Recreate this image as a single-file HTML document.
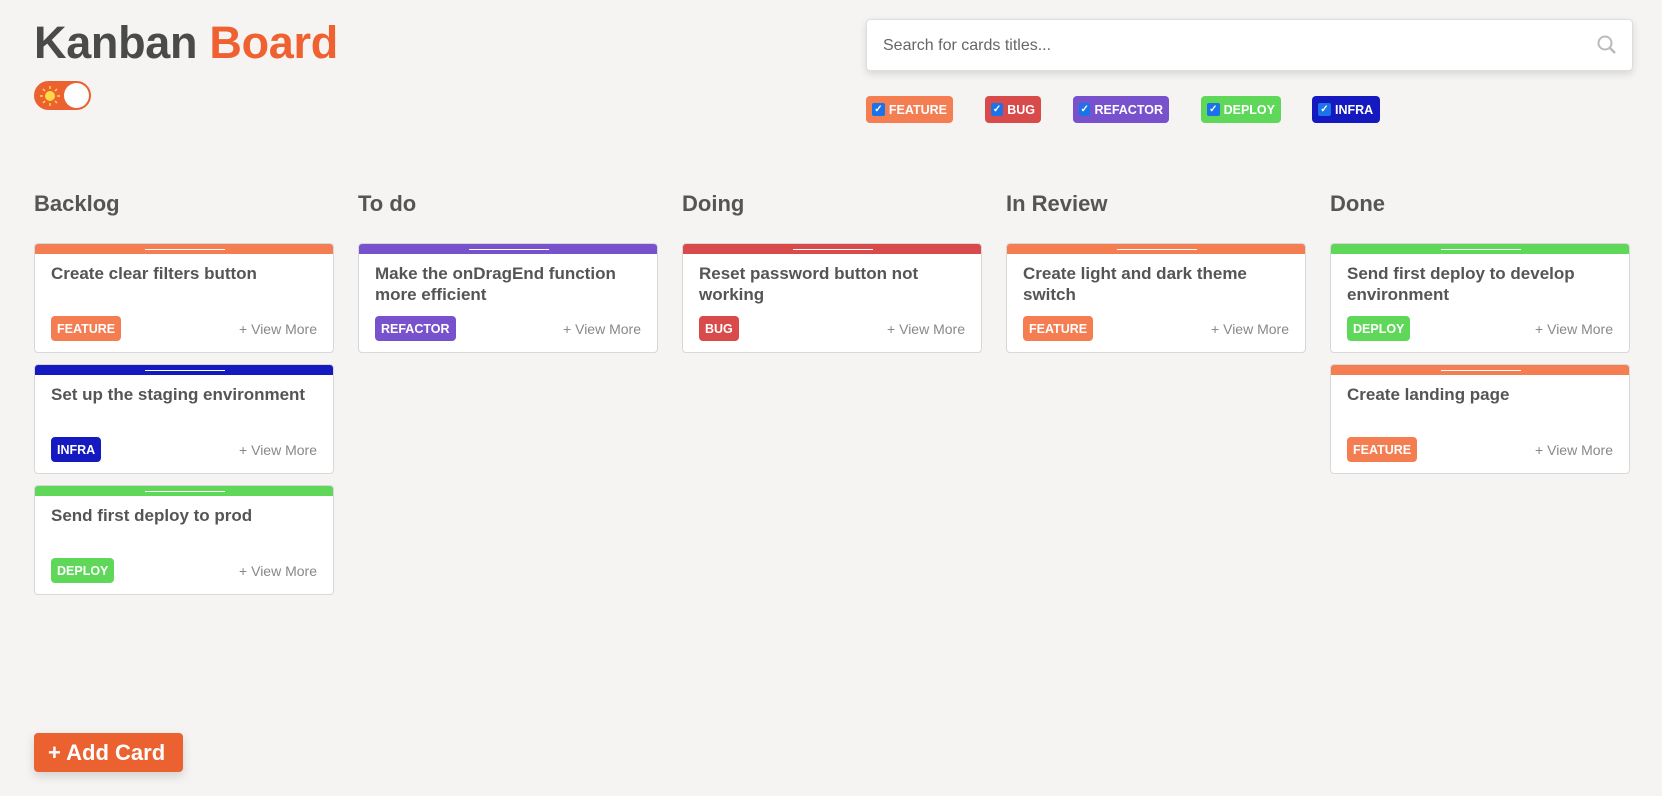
<!DOCTYPE html>
<html><head><meta charset="utf-8"><style>
*{box-sizing:border-box;margin:0;padding:0}
body{width:1662px;height:796px;background:#f5f4f2;font-family:"Liberation Sans",sans-serif;position:relative;overflow:hidden;color:#555}
h1{position:absolute;left:34px;top:17px;font-size:45px;font-weight:bold;color:#4a4a4a;letter-spacing:-0.3px}
h1 span{color:#ef6130}
.tog{position:absolute;left:34px;top:81px;width:57px;height:29px;border-radius:15px;background:#ec6130;border:1px solid #ec6130}
.tog .k{position:absolute;right:1px;top:1px;width:25px;height:25px;border-radius:50%;background:#fff}
.search{position:absolute;left:866px;top:19px;width:767px;height:52px;background:#fff;border:1px solid #ddd;border-radius:4px;box-shadow:0 3px 8px rgba(0,0,0,.12);font-size:16px;color:#666;padding:17px 0 0 16px}
.f{position:absolute;top:96px;height:27px;border-radius:4px;color:#fff;font-weight:bold;font-size:12.5px;padding:7px 6px 0 6px;display:flex;gap:4px}
.cb{width:13px;height:13px;background:#1a73e8;border-radius:2px;color:#fff;font-size:10px;line-height:13px;text-align:center;margin-top:0}
.col{position:absolute;top:191px;width:300px}
.col h2{font-size:22px;font-weight:bold;color:#555;height:52px}
.card{position:relative;width:300px;height:110px;background:#fff;border:1px solid #d8d8d8;border-radius:4px;margin-bottom:11px;overflow:hidden}
.card .bar{height:10px;position:relative}
.card .bar:after{content:"";position:absolute;left:110px;top:5px;width:80px;height:1px;background:#fff}
.card .t{font-size:17px;font-weight:bold;color:#555;padding:9px 16px 0;line-height:21px;height:62px}
.tag{position:absolute;left:16px;bottom:11px;height:25px;border-radius:4px;color:#fff;font-weight:bold;font-size:12.5px;padding:6px 6px 0}
.vm{position:absolute;right:16px;bottom:15px;font-size:14px;color:#888}
.add{position:absolute;left:34px;top:733px;width:149px;height:39px;background:#ec6130;border-radius:4px;color:#fff;font-weight:bold;font-size:22px;padding:7px 0 0 14px;box-shadow:0 4px 10px rgba(0,0,0,.15)}
</style></head><body>
<h1>Kanban <span>Board</span></h1>
<div class="tog"><svg width="26" height="26" style="position:absolute;left:2px;top:1px" viewBox="0 0 26 26"><circle cx="13" cy="13" r="5" fill="#ffd84a"/><g stroke="#ffd84a" stroke-width="1.5"><path d="M13 3v3M13 20v3M3 13h3M20 13h3M6 6l2 2M18 18l2 2M6 20l2-2M18 8l2-2"/></g></svg><div class="k"></div></div>
<div class="search">Search for cards titles...<svg style="position:absolute;right:14px;top:14px" width="22" height="22" viewBox="0 0 22 22"><circle cx="9" cy="9" r="6.5" fill="none" stroke="#bbb" stroke-width="2"/><path d="M14 14l5 5" stroke="#bbb" stroke-width="2.5"/></svg></div>
<div class="f" style="left:866px;width:87px;background:#f47d52"><div class="cb">✓</div>FEATURE</div>
<div class="f" style="left:985px;width:56px;background:#d94a4a"><div class="cb">✓</div>BUG</div>
<div class="f" style="left:1073px;width:96px;background:#7752cc"><div class="cb">✓</div>REFACTOR</div>
<div class="f" style="left:1201px;width:80px;background:#5fd85a"><div class="cb">✓</div>DEPLOY</div>
<div class="f" style="left:1312px;width:68px;background:#1419c0"><div class="cb">✓</div>INFRA</div>

<div class="col" style="left:34px"><h2>Backlog</h2>
<div class="card"><div class="bar" style="background:#f47d52"></div><div class="t">Create clear filters button</div><div class="tag" style="background:#f47d52">FEATURE</div><div class="vm">+ View More</div></div>
<div class="card"><div class="bar" style="background:#1419c0"></div><div class="t">Set up the staging environment</div><div class="tag" style="background:#1419c0">INFRA</div><div class="vm">+ View More</div></div>
<div class="card"><div class="bar" style="background:#5fd85a"></div><div class="t">Send first deploy to prod</div><div class="tag" style="background:#5fd85a">DEPLOY</div><div class="vm">+ View More</div></div>
</div>
<div class="col" style="left:358px"><h2>To do</h2>
<div class="card"><div class="bar" style="background:#7752cc"></div><div class="t">Make the onDragEnd function more efficient</div><div class="tag" style="background:#7752cc">REFACTOR</div><div class="vm">+ View More</div></div>
</div>
<div class="col" style="left:682px"><h2>Doing</h2>
<div class="card"><div class="bar" style="background:#d94a4a"></div><div class="t">Reset password button not working</div><div class="tag" style="background:#d94a4a">BUG</div><div class="vm">+ View More</div></div>
</div>
<div class="col" style="left:1006px"><h2>In Review</h2>
<div class="card"><div class="bar" style="background:#f47d52"></div><div class="t">Create light and dark theme switch</div><div class="tag" style="background:#f47d52">FEATURE</div><div class="vm">+ View More</div></div>
</div>
<div class="col" style="left:1330px"><h2>Done</h2>
<div class="card"><div class="bar" style="background:#5fd85a"></div><div class="t">Send first deploy to develop environment</div><div class="tag" style="background:#5fd85a">DEPLOY</div><div class="vm">+ View More</div></div>
<div class="card"><div class="bar" style="background:#f47d52"></div><div class="t">Create landing page</div><div class="tag" style="background:#f47d52">FEATURE</div><div class="vm">+ View More</div></div>
</div>
<div class="add">+ Add Card</div>
</body></html>
